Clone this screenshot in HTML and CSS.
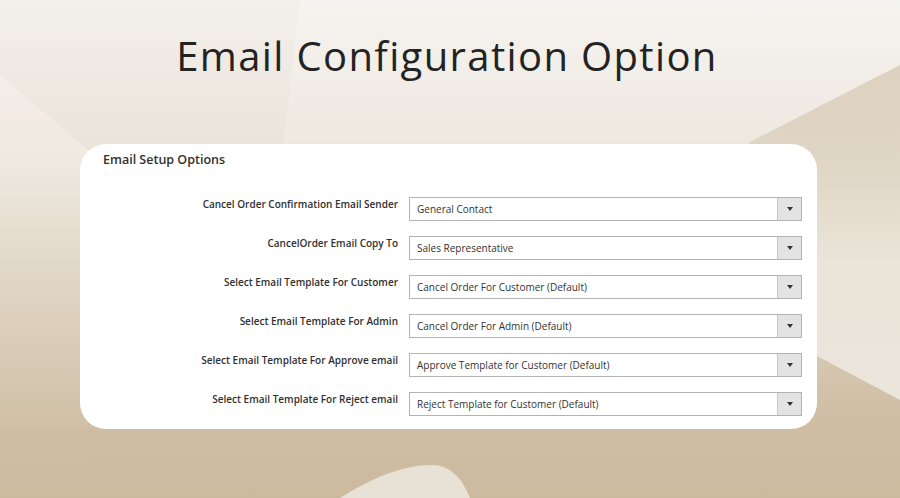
FILE: index.html
```html
<!DOCTYPE html>
<html>
<head>
<meta charset="utf-8">
<link rel="stylesheet" href="styles.css">
</head>
<body>
<div class="page">
  <svg class="bg" viewBox="0 0 900 498" preserveAspectRatio="none" aria-hidden="true">
    <defs>
      <linearGradient id="base" x1="0" y1="0" x2="0" y2="1">
        <stop offset="0" stop-color="#f6f4f0"/>
        <stop offset="0.28" stop-color="#eee8e0"/>
        <stop offset="0.55" stop-color="#e0d5c4"/>
        <stop offset="0.82" stop-color="#d0bfa6"/>
        <stop offset="1" stop-color="#ccba9f"/>
      </linearGradient>
      <linearGradient id="leftl" x1="0" y1="0" x2="0" y2="1">
        <stop offset="0" stop-color="#f3eee8"/>
        <stop offset="0.2" stop-color="#efe9e1"/>
        <stop offset="0.5" stop-color="#e0d5c4"/>
        <stop offset="0.85" stop-color="#cebea4"/>
        <stop offset="1" stop-color="#ccba9f"/>
      </linearGradient>
      <linearGradient id="rightl" x1="0" y1="0" x2="0" y2="1">
        <stop offset="0" stop-color="#ddd1bf"/>
        <stop offset="0.3" stop-color="#e0d6c6"/>
        <stop offset="0.6" stop-color="#ebe4d9"/>
        <stop offset="1" stop-color="#ece5db"/>
      </linearGradient>
    </defs>
    <rect x="0" y="0" width="900" height="498" fill="url(#base)"/>
    <polygon points="0,0 300,0 283,146 88,150 0,75" fill="#6b4f2a" opacity="0.025"/>
    <polygon points="0,75 88,150 88,498 0,498" fill="url(#leftl)"/>
    <polygon points="750,142 900,65 900,400 817,356 817,200 750,200" fill="url(#rightl)"/>
    <path d="M340,498 C372,478 402,465 432,465 C452,465 463,481 470,498 Z" fill="#e8e1d6"/>
  </svg>

  <h1 class="title">Email Configuration Option</h1>

  <section class="card">
    <h2 class="card-title">Email Setup Options</h2>
    <div class="form">
      <label class="label">Cancel Order Confirmation Email Sender</label>
      <div class="select"><span class="value">General Contact</span><span class="arrow"></span></div>

      <label class="label">CancelOrder Email Copy To</label>
      <div class="select"><span class="value">Sales Representative</span><span class="arrow"></span></div>

      <label class="label">Select Email Template For Customer</label>
      <div class="select"><span class="value">Cancel Order For Customer (Default)</span><span class="arrow"></span></div>

      <label class="label">Select Email Template For Admin</label>
      <div class="select"><span class="value">Cancel Order For Admin (Default)</span><span class="arrow"></span></div>

      <label class="label">Select Email Template For Approve email</label>
      <div class="select"><span class="value">Approve Template for Customer (Default)</span><span class="arrow"></span></div>

      <label class="label">Select Email Template For Reject email</label>
      <div class="select"><span class="value">Reject Template for Customer (Default)</span><span class="arrow"></span></div>
    </div>
  </section>
</div>
</body>
</html>
```
FILE: styles.css
```css
* { box-sizing: border-box; }
html, body { margin: 0; padding: 0; }
body {
  width: 900px;
  height: 498px;
  overflow: hidden;
  font-family: "Open Sans", "Liberation Sans", sans-serif;
}
.page {
  position: relative;
  width: 900px;
  height: 498px;
  display: flex;
  flex-direction: column;
  align-items: flex-start;
}
.bg {
  position: absolute;
  left: 0;
  top: 0;
  width: 900px;
  height: 498px;
  z-index: 0;
}
.title {
  position: relative;
  align-self: center;
  margin: 28px 6px 0 0;
  font-weight: 400;
  font-size: 40px;
  line-height: 56px;
  letter-spacing: 1.36px;
  color: #232323;
}
.card {
  position: relative;
  margin: 60px 0 0 80px;
  width: 737px;
  height: 285px;
  background: #fff;
  border-radius: 26px;
  padding: 7px 15px 0 23px;
}
.card-title {
  margin: 0;
  font-size: 12.5px;
  font-weight: 600;
  line-height: 18px;
  color: #303030;
}
.form {
  margin-top: 28px;
  display: grid;
  grid-template-columns: 1fr 393px;
  column-gap: 11px;
  row-gap: 15px;
}
.label {
  text-align: right;
  font-size: 10px;
  font-weight: 600;
  line-height: 14px;
  color: #303030;
}
.select {
  height: 24px;
  border: 1px solid #b3b3b3;
  display: flex;
  align-items: center;
  background: #fff;
}
.value {
  flex: 1;
  padding-left: 7px;
  font-size: 10px;
  color: #333;
}
.arrow {
  width: 24px;
  height: 100%;
  background: #e3e3e3;
  border-left: 1px solid #c8c8c8;
  position: relative;
}
.arrow::after {
  content: "";
  position: absolute;
  left: 9px;
  top: 9px;
  border-left: 3px solid transparent;
  border-right: 3px solid transparent;
  border-top: 4px solid #333;
}
```
